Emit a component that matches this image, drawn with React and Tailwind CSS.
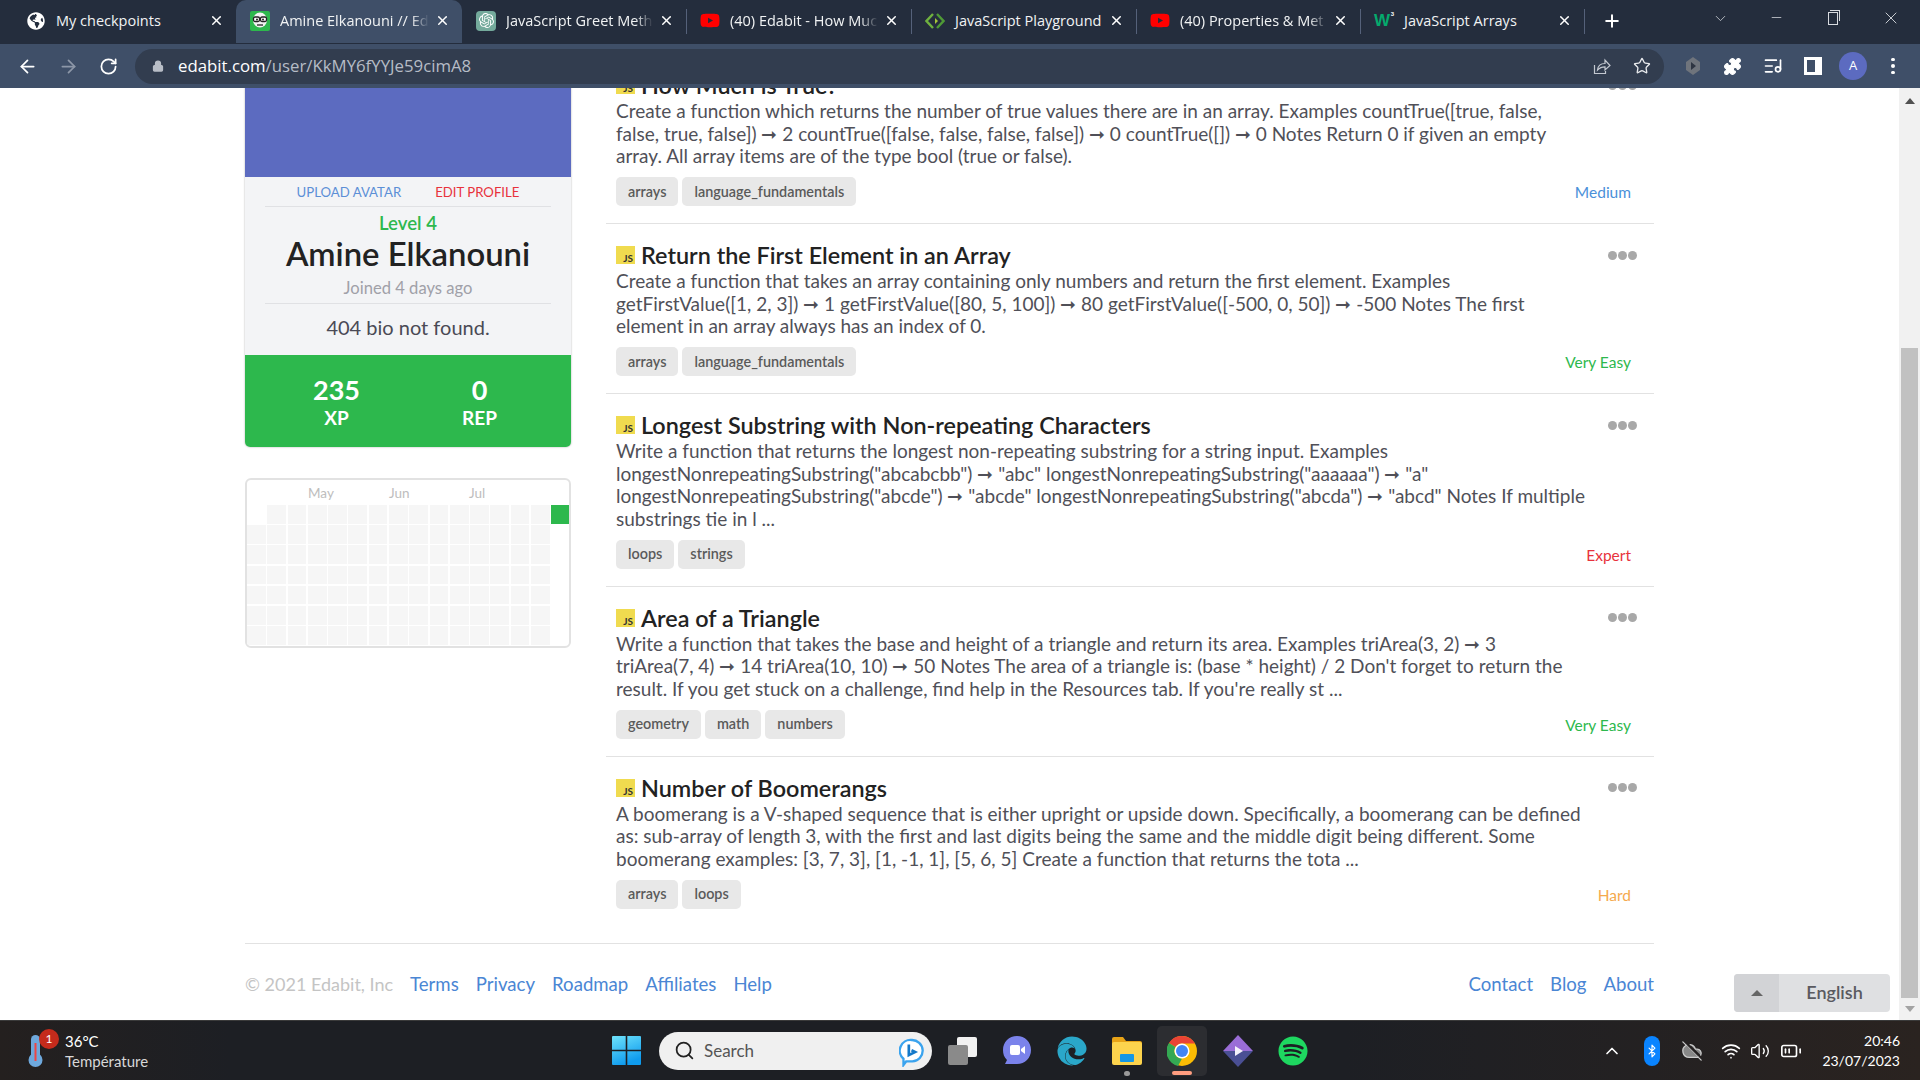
import {
  ArrowLeft,
  ArrowRight,
  RotateCw,
  Lock,
  Star,
  Puzzle,
  ListMusic,
  ChevronDown,
  ChevronUp,
  Minus,
  X,
  Plus,
  Search,
  Bluetooth,
  CloudOff,
  Wifi,
  Volume2,
  BatteryMedium,
} from "lucide-react"
import { FaGlobeAmericas, FaSpotify, FaYoutube, FaEdge } from "react-icons/fa"
import { SiOpenai } from "react-icons/si"

const arrow = "➞"

const challenges = [
  {
    title: "How Much is True?",
    text: `Create a function which returns the number of true values there are in an array. Examples countTrue([true, false,
false, true, false]) ${arrow} 2 countTrue([false, false, false, false]) ${arrow} 0 countTrue([]) ${arrow} 0 Notes Return 0 if given an empty
array. All array items are of the type bool (true or false).`,
    tags: ["arrays", "language_fundamentals"],
    level: "Medium",
    levelClass: "text-[#4a90d9]",
  },
  {
    title: "Return the First Element in an Array",
    text: `Create a function that takes an array containing only numbers and return the first element. Examples
getFirstValue([1, 2, 3]) ${arrow} 1 getFirstValue([80, 5, 100]) ${arrow} 80 getFirstValue([-500, 0, 50]) ${arrow} -500 Notes The first
element in an array always has an index of 0.`,
    tags: ["arrays", "language_fundamentals"],
    level: "Very Easy",
    levelClass: "text-[#2db84d]",
  },
  {
    title: "Longest Substring with Non-repeating Characters",
    text: `Write a function that returns the longest non-repeating substring for a string input. Examples
longestNonrepeatingSubstring("abcabcbb") ${arrow} "abc" longestNonrepeatingSubstring("aaaaaa") ${arrow} "a"
longestNonrepeatingSubstring("abcde") ${arrow} "abcde" longestNonrepeatingSubstring("abcda") ${arrow} "abcd" Notes If multiple
substrings tie in l ...`,
    tags: ["loops", "strings"],
    level: "Expert",
    levelClass: "text-[#e8323c]",
  },
  {
    title: "Area of a Triangle",
    text: `Write a function that takes the base and height of a triangle and return its area. Examples triArea(3, 2) ${arrow} 3
triArea(7, 4) ${arrow} 14 triArea(10, 10) ${arrow} 50 Notes The area of a triangle is: (base * height) / 2 Don't forget to return the
result. If you get stuck on a challenge, find help in the Resources tab. If you're really st ...`,
    tags: ["geometry", "math", "numbers"],
    level: "Very Easy",
    levelClass: "text-[#2db84d]",
  },
  {
    title: "Number of Boomerangs",
    text: `A boomerang is a V-shaped sequence that is either upright or upside down. Specifically, a boomerang can be defined
as: sub-array of length 3, with the first and last digits being the same and the middle digit being different. Some
boomerang examples: [3, 7, 3], [1, -1, 1], [5, 6, 5] Create a function that returns the tota ...`,
    tags: ["arrays", "loops"],
    level: "Hard",
    levelClass: "text-[#f5a94d]",
  },
]

const GlobeIcon = () => <FaGlobeAmericas className="text-white" size={18} />

const EdabitIcon = () => (
  <svg width="20" height="20" viewBox="0 0 20 20">
    <rect width="20" height="20" rx="2" fill="#2db84d" />
    <ellipse cx="10" cy="9" rx="7" ry="7.5" fill="#f2f2f2" />
    <rect x="3.5" y="6" width="6" height="4.5" rx="1.5" fill="#fff" stroke="#222" strokeWidth="1.3" />
    <rect x="10.5" y="6" width="6" height="4.5" rx="1.5" fill="#fff" stroke="#222" strokeWidth="1.3" />
    <circle cx="7" cy="8.5" r="1" fill="#222" />
    <circle cx="13" cy="8.5" r="1" fill="#222" />
    <path d="M7 14h6" stroke="#222" strokeWidth="1.3" />
  </svg>
)

const GptIcon = () => (
  <span className="flex h-[20px] w-[20px] items-center justify-center rounded-[4px] bg-[#74aa9c]">
    <SiOpenai className="text-white" size={15} />
  </span>
)

const YoutubeIcon = () => <FaYoutube className="text-[#ff0000]" size={21} />

const PlaygroundIcon = () => (
  <svg width="20" height="20" viewBox="0 0 20 20" fill="none">
    <path d="M8 3 1.5 10 8 17" stroke="#6fb13f" strokeWidth="2.4" />
    <path d="M12 3l6.5 7-6.5 7" stroke="#4f9a36" strokeWidth="2.4" />
    <path d="M10 7l3 3-3 3z" fill="#a4c639" />
  </svg>
)

const W3Icon = () => (
  <span className="relative w-[20px] font-['Liberation_Sans',sans-serif] text-[17px] leading-none font-bold text-[#04aa6d]">
    W
    <span className="absolute top-[-1px] right-[0px] text-[6px] text-white">3</span>
  </span>
)

const ShareIcon = () => (
  <svg width="18" height="18" viewBox="0 0 18 18" fill="none" stroke="#c3c8d0" strokeWidth="1.2">
    <path d="M1.500 8v8.500h11V14" />
    <path d="M4.500 13c.5-4.500 3.500-6.500 7.500-6.500V3l5 5.500-5 4.500V9.800c-3 0-5.500 1-7.500 3.200z" />
  </svg>
)

const tabs = [
  { title: "My checkpoints", icon: <GlobeIcon />, width: "w-[225px]", left: "pl-[15px]" },
  { title: "Amine Elkanouni // Ed", icon: <EdabitIcon />, active: true, width: "w-[226px]", fade: true },
  { title: "JavaScript Greet Meth", icon: <GptIcon />, width: "w-[224px]", fade: true },
  { title: "(40) Edabit - How Muc", icon: <YoutubeIcon />, width: "w-[225px]", sep: true, fade: true },
  { title: "JavaScript Playground", icon: <PlaygroundIcon />, width: "w-[225px]", sep: true },
  { title: "(40) Properties & Met", icon: <YoutubeIcon />, width: "w-[224px]", sep: true, fade: true },
  { title: "JavaScript Arrays", icon: <W3Icon />, width: "w-[224px]", sep: true },
]

function Tab({ tab }) {
  return (
    <div
      className={`relative flex h-[43px] shrink-0 items-center pr-[12px] pb-[2px] ${tab.left || "pl-[14px]"} ${tab.width} ${
        tab.active ? "rounded-t-[10px] bg-[#3f4f68]" : ""
      }`}
    >
      {tab.sep && <span className="absolute top-[9px] left-0 h-[25px] w-px bg-[#55617a]" />}
      <span className="flex w-[20px] shrink-0 items-center justify-center">{tab.icon}</span>
      <span
        className={`ml-[10px] min-w-0 flex-1 text-[14.5px] whitespace-nowrap text-[#f1f3f4] ${
          tab.fade ? "[mask-image:linear-gradient(to_right,black_88%,transparent)]" : ""
        }`}
      >
        {tab.title}
      </span>
      <X className="ml-[6px] shrink-0 text-white" size={15} strokeWidth={2.4} />
    </div>
  )
}

function BrowserChrome() {
  return (
    <div className="font-['Open_Sans',sans-serif]">
      <div className="flex h-[44px] items-start bg-[#242d3d] pl-[11px]">
        {tabs.map((tab) => (
          <Tab key={tab.title} tab={tab} />
        ))}
        <div className="relative flex h-[43px] items-center pb-[2px] pl-[18px]">
          <span className="absolute top-[9px] left-0 h-[25px] w-px bg-[#55617a]" />
          <Plus className="text-white" size={20} strokeWidth={2.4} />
        </div>
        <ChevronDown className="mt-[10px] ml-[90px] text-[#c8ccd2]" size={17} strokeWidth={1.2} />
        <Minus className="mt-[10px] ml-[40px] text-[#d8dbe0]" size={15} strokeWidth={1.2} />
        <span className="relative mt-[12px] ml-[44px] block h-[13px] w-[10px] border border-[#d8dbe0]">
          <span className="absolute -top-[3px] -right-[3px] h-[11px] w-[10px] border-t border-r border-[#d8dbe0]" />
        </span>
        <X className="mt-[8px] ml-[43px] text-[#d8dbe0]" size={20} strokeWidth={1.1} />
      </div>
      <div className="flex h-[44px] items-center bg-[#3f4f68] text-white">
        <ArrowLeft className="ml-[17px]" size={21} strokeWidth={2} />
        <ArrowRight className="ml-[20px] text-[#8d97a8]" size={21} strokeWidth={2} />
        <RotateCw className="ml-[20px]" size={19} strokeWidth={2.2} />
        <div className="ml-[17px] flex h-[35px] w-[1529px] items-center rounded-full bg-[#323d4f] pl-[17px]">
          <Lock className="fill-[#b9bec7] text-[#b9bec7]" size={12} strokeWidth={2.5} />
          <span className="ml-[14px] text-[16.8px] whitespace-nowrap text-white">
            edabit.com<span className="text-[#b6bcc6]">/user/KkMY6fYYJe59cimA8</span>
          </span>
          <span className="ml-auto">
            <ShareIcon />
          </span>
          <Star className="mr-[13px] ml-[22px] text-[#e8eaed]" size={18} strokeWidth={1.8} />
        </div>
        <svg className="ml-[20px]" width="18" height="20" viewBox="0 0 18 20">
          <path d="M9 1 16 6v8l-7 5-7-5V6z" fill="#6f747c" />
          <path d="M7 6l5 4-5 4z" fill="#2e3542" />
        </svg>
        <Puzzle className="ml-[21px] fill-white" size={19} strokeWidth={1.5} />
        <ListMusic className="ml-[21px]" size={20} strokeWidth={2} />
        <span className="ml-[21px] block h-[18px] w-[18px] border-[3px] border-r-[7px] border-white" />
        <span className="ml-[17px] flex h-[28px] w-[28px] items-center justify-center rounded-full bg-[#5c6bc0] text-[13px]">
          A
        </span>
        <span className="ml-[24px] flex flex-col gap-[3px]">
          <i className="block h-[3.5px] w-[3.5px] rounded-full bg-white" />
          <i className="block h-[3.5px] w-[3.5px] rounded-full bg-white" />
          <i className="block h-[3.5px] w-[3.5px] rounded-full bg-white" />
        </span>
      </div>
    </div>
  )
}

function ProfileCard() {
  return (
    <div className="overflow-hidden rounded-b-[5px] bg-[#f3f4f6] shadow-[0_0_2px_rgba(0,0,0,0.35)]">
      <div className="h-[123px] bg-[#5c6bc0]" />
      <div className="px-[20px] text-center">
        <div className="flex h-[30px] items-center justify-center gap-[34px] border-b border-[#e0e1e4] pt-[2px] text-[13.2px]">
          <span className="text-[#5c8fd6]">UPLOAD AVATAR</span>
          <span className="text-[#e8323c]">EDIT PROFILE</span>
        </div>
        <div className="pt-[4px] text-[18.6px] leading-[24px] font-semibold text-[#2db84d]">Level 4</div>
        <div className="text-[32.8px] leading-[38px] font-semibold text-[#222]">Amine Elkanouni</div>
        <div className="pt-[3px] pb-[3px] text-[16.6px] leading-[24px] text-[#a0a0a8]">Joined 4 days ago</div>
        <div className="border-t border-[#e0e1e4] pt-[10px] pb-[14px] text-[20px] leading-[27px] text-[#4a4a55]">
          404 bio not found.
        </div>
      </div>
      <div className="grid h-[92px] grid-cols-2 bg-[#2db84d] px-[20px] pt-[19px] text-center font-bold text-white">
        <div>
          <div className="text-[27px] leading-[32px]">235</div>
          <div className="text-[19px] leading-[24px]">XP</div>
        </div>
        <div>
          <div className="text-[27px] leading-[32px]">0</div>
          <div className="text-[19px] leading-[24px]">REP</div>
        </div>
      </div>
    </div>
  )
}

// 7 rows of 16 weeks; the first row has no first cell, only the first row has the last one
const calendarCells = Array.from({ length: 7 * 16 }, (_, i) => {
  const row = Math.floor(i / 16)
  const col = i % 16
  if (row === 0 && col === 0) return "bg-transparent"
  if (row === 0 && col === 15) return "bg-[#2db84d]"
  if (col === 15) return "bg-transparent"
  return "bg-[#f6f6f6]"
})

function ActivityCalendar() {
  return (
    <div className="mt-[31px] h-[170px] overflow-hidden rounded-[6px] border-2 border-[#e2e2e2] pt-[3px]">
      <div className="relative h-[22px] text-[13.5px] leading-[20px] text-[#bdbdbd]">
        <span className="absolute left-[61px]">May</span>
        <span className="absolute left-[142px]">Jun</span>
        <span className="absolute left-[222px]">Jul</span>
      </div>
      <div className="grid grid-cols-[repeat(16,18.7px)] grid-rows-[repeat(7,18.6px)] gap-[1.6px]">
        {calendarCells.map((cellClass, i) => (
          <div key={i} className={cellClass} />
        ))}
      </div>
    </div>
  )
}

function ChallengeRow({ item, last }) {
  return (
    <div className={`pt-[16px] pr-[17px] pl-[10px] ${last ? "" : "border-b border-[#e2e2e2] pb-[17px]"}`}>
      <div className="flex h-[30px] items-center">
        <span className="flex h-[18px] w-[19px] items-end justify-end bg-[#f0db4f] pr-[2px] text-[10px] leading-[12px] font-bold text-[#333]">
          JS
        </span>
        <h3 className="ml-[6px] text-[23.4px] leading-[30px] font-semibold text-[#222]">{item.title}</h3>
        <span className="ml-auto flex gap-[1px]">
          <i className="block h-[9px] w-[9px] rounded-full bg-[#a8a8a8]" />
          <i className="block h-[9px] w-[9px] rounded-full bg-[#a8a8a8]" />
          <i className="block h-[9px] w-[9px] rounded-full bg-[#a8a8a8]" />
        </span>
      </div>
      <p className="text-[19px] leading-[22.67px] whitespace-pre-line text-[#505058]">{item.text}</p>
      <div className="mt-[9px] flex items-center gap-[4px] pr-[6px]">
        {item.tags.map((tag) => (
          <span
            key={tag}
            className="flex h-[29px] items-center rounded-[5px] bg-[#e8e8e8] px-[12px] text-[14.4px] font-semibold text-[#5a5a5a]"
          >
            {tag}
          </span>
        ))}
        <span className={`ml-auto pt-[2px] text-[15.5px] ${item.levelClass}`}>{item.level}</span>
      </div>
    </div>
  )
}

function Footer() {
  return (
    <div className="mt-[34px] flex h-[82px] items-start justify-between border-t border-[#e2e2e2] pt-[28px] text-[18.6px] leading-[24px] text-[#4a86d4]">
      <div className="flex items-baseline gap-[17px]">
        <span className="text-[18px] text-[#c4c4c4]">© 2021 Edabit, Inc</span>
        <span>Terms</span>
        <span>Privacy</span>
        <span>Roadmap</span>
        <span>Affiliates</span>
        <span>Help</span>
      </div>
      <div className="flex gap-[17px]">
        <span>Contact</span>
        <span>Blog</span>
        <span>About</span>
      </div>
    </div>
  )
}

function Scrollbar() {
  return (
    <div className="flex h-full w-[21px] shrink-0 flex-col items-center bg-[#f1f1f1] pt-[10px]">
      <span className="h-0 w-0 border-x-[5px] border-b-[6px] border-x-transparent border-b-[#505050]" />
      <div className="mt-auto mb-[8px] h-[650px] w-[17px] bg-[#c1c1c1]" />
      <span className="mb-[8px] h-0 w-0 border-x-[5px] border-t-[6px] border-x-transparent border-t-[#a3a3a3]" />
    </div>
  )
}

function LanguagePicker() {
  return (
    <div className="absolute right-[30px] bottom-[8px] flex h-[38px] w-[156px] overflow-hidden rounded-[4px] bg-[#dfe0e2] text-[18px] font-semibold text-[#5a5a60]">
      <span className="flex w-[45px] items-center justify-center bg-[#d2d3d6]">
        <span className="h-0 w-0 border-x-[6px] border-b-[6px] border-x-transparent border-b-[#666]" />
      </span>
      <span className="flex flex-1 items-center justify-center pb-[2px]">English</span>
    </div>
  )
}

const StartIcon = () => (
  <svg width="29" height="29" viewBox="0 0 29 29">
    <defs>
      <linearGradient id="win" x1="0" y1="0" x2="0.4" y2="1">
        <stop offset="0" stopColor="#6fe3fb" />
        <stop offset="1" stopColor="#0f9bee" />
      </linearGradient>
    </defs>
    <path d="M0 1a1 1 0 0 1 1-1h12.7v13.7H0zM15.3 0H28a1 1 0 0 1 1 1v12.7H15.3zM0 15.3h13.7V29H1a1 1 0 0 1-1-1zM15.3 15.3H29V28a1 1 0 0 1-1 1H15.3z" fill="url(#win)" />
  </svg>
)

const BingIcon = () => (
  <svg width="25" height="29" viewBox="0 0 28 32" fill="none">
    <path d="M14 2a12 12 0 0 1 1 24H8l-3 4v-7A12 12 0 0 1 14 2z" fill="#fff" stroke="#3aa3ee" strokeWidth="2.6" />
    <path d="M11 7v12l7-3.500-4-2" stroke="#1479c9" strokeWidth="3" />
  </svg>
)

const TaskViewIcon = () => (
  <span className="relative block h-[28px] w-[29px]">
    <span className="absolute top-0 right-0 h-[20px] w-[20px] rounded-[2px] bg-[#f1f1f1]" />
    <span className="absolute bottom-0 left-0 h-[20px] w-[20px] rounded-[2px] bg-[#8a8a8a]" />
  </span>
)

const MeetIcon = () => (
  <svg width="30" height="32" viewBox="0 0 30 32">
    <path d="M15 1c8 0 14 6 14 14s-6 14-14 14H3l2-4C2 22 1 19 1 15 1 7 7 1 15 1z" fill="#7b83eb" />
    <rect x="8" y="10" width="10" height="10" rx="2" fill="#fff" />
    <path d="M19 14l4-3v8l-4-3z" fill="#fff" />
  </svg>
)

const FilesIcon = () => (
  <svg width="30" height="28" viewBox="0 0 30 28">
    <path d="M0 2a2 2 0 0 1 2-2h9l3 4h14a2 2 0 0 1 2 2v4H0z" fill="#e8a317" />
    <rect y="5" width="30" height="23" rx="2" fill="#fcd34d" />
    <rect x="8" y="17" width="14" height="8" rx="1" fill="#1597e5" />
  </svg>
)

const ChromeIcon = () => (
  <svg width="30" height="30" viewBox="0 0 30 30">
    <circle cx="15" cy="15" r="15" fill="#fbbc04" />
    <path d="M15 0a15 15 0 0 1 13 7.5H15A7.5 7.5 0 0 0 8.5 11L2 7A15 15 0 0 1 15 0z" fill="#ea4335" />
    <path d="M2 7l6.5 4a7.5 7.5 0 0 0 6.5 11.500L11 30A15 15 0 0 1 2 7z" fill="#34a853" />
    <circle cx="15" cy="15" r="7.500" fill="#fff" />
    <circle cx="15" cy="15" r="6" fill="#4285f4" />
  </svg>
)

const ObsidianIcon = () => (
  <svg width="30" height="32" viewBox="0 0 30 32">
    <path d="M15 0l15 16H0z" fill="#9a6dd7" />
    <path d="M0 16h30L15 32z" fill="#4a4f94" />
    <path d="M12 11l8 5-8 5z" fill="#f4f1fb" />
  </svg>
)

function Taskbar() {
  return (
    <div className="flex h-[60px] items-center border-t border-[#3a3a3a] bg-[linear-gradient(to_right,#24201f,#1d1f24_12%,#1d1f24_70%,#2a2320)] text-white">
      <div className="flex w-[612px] shrink-0 items-center pl-[28px]">
        <div className="relative h-[36px] w-[37px]">
          <svg width="16" height="36" viewBox="0 0 16 36">
            <rect x="3" y="2" width="9" height="26" rx="4.500" fill="#6ea8dc" />
            <circle cx="7.500" cy="27" r="7" fill="#6ea8dc" />
            <rect x="6.500" y="10" width="2" height="18" fill="#e44" />
          </svg>
          <span className="absolute top-[-4px] left-[11px] flex h-[20px] w-[20px] items-center justify-center rounded-full bg-[#c42b1c] text-[12px]">
            1
          </span>
        </div>
        <div className="text-[15px] leading-[20px]">
          <div>36°C</div>
          <div className="text-[#d8d8d8]">Température</div>
        </div>
      </div>
      <StartIcon />
      <div className="ml-[18px] flex h-[38px] w-[273px] items-center rounded-full bg-[#f0f0f0] pr-[8px] pl-[15px] text-[17px] text-[#555]">
        <Search className="text-[#222]" size={21} strokeWidth={2} />
        <span className="ml-[9px]">Search</span>
        <span className="ml-auto pt-[3px]">
          <BingIcon />
        </span>
      </div>
      <div className="ml-[16px]">
        <TaskViewIcon />
      </div>
      <div className="ml-[25px]">
        <MeetIcon />
      </div>
      <FaEdge className="ml-[25px] text-[#2aa7c9]" size={30} />
      <div className="relative ml-[25px]">
        <FilesIcon />
        <span className="absolute bottom-[-11px] left-[12px] h-[5px] w-[6px] rounded-full bg-[#9a9a9a]" />
      </div>
      <div className="relative ml-[15px] flex h-[50px] w-[50px] items-center justify-center rounded-[5px] bg-[#2c2d31]">
        <ChromeIcon />
        <span className="absolute bottom-[1px] left-[15px] h-[4px] w-[20px] rounded-full bg-[#ff9d80]" />
      </div>
      <div className="ml-[16px]">
        <ObsidianIcon />
      </div>
      <FaSpotify className="ml-[25px] text-[#1ed760]" size={30} />
      <div className="ml-auto flex items-center pr-[20px]">
        <ChevronUp size={20} strokeWidth={2} />
        <span className="ml-[22px] flex h-[30px] w-[16px] items-center justify-center rounded-full bg-[#0a84ff]">
          <Bluetooth size={14} />
        </span>
        <CloudOff className="ml-[21px] fill-[#888] text-[#ccc]" size={22} strokeWidth={1.4} />
        <Wifi className="ml-[18px]" size={20} strokeWidth={2} />
        <Volume2 className="ml-[9px]" size={20} strokeWidth={1.6} />
        <BatteryMedium className="ml-[10px]" size={22} strokeWidth={1.8} />
        <div className="ml-[20px] text-right text-[14px] leading-[20px]">
          <div>20:46</div>
          <div>23/07/2023</div>
        </div>
      </div>
    </div>
  )
}

export default function App() {
  return (
    <div className="flex h-[1080px] w-[1920px] flex-col overflow-hidden bg-white font-['Lato',sans-serif]">
      <BrowserChrome />
      <div className="relative flex h-[932px] overflow-hidden">
        <div className="-mt-[34px] min-w-0 flex-1 pl-[245px]">
          <div className="w-[1409px]">
            <div className="flex items-start">
              <aside className="w-[326px] shrink-0">
                <ProfileCard />
                <ActivityCalendar />
              </aside>
              <main className="ml-[35px] w-[1048px] shrink-0">
                {challenges.map((item, i) => (
                  <ChallengeRow key={item.title} item={item} last={i === challenges.length - 1} />
                ))}
              </main>
            </div>
            <Footer />
          </div>
        </div>
        <Scrollbar />
        <LanguagePicker />
      </div>
      <Taskbar />
    </div>
  )
}
